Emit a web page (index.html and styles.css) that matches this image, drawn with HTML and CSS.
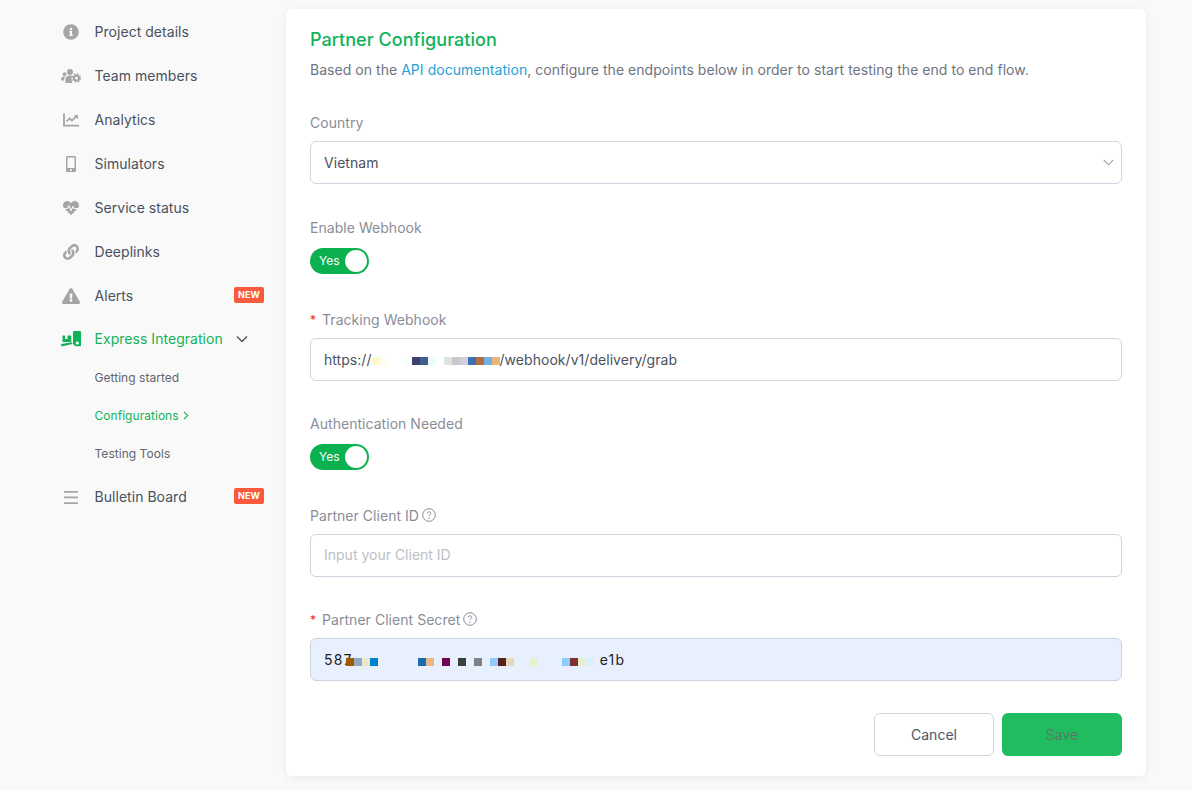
FILE: index.html
```html
<!DOCTYPE html>
<html lang="en">
<head>
    <meta charset="UTF-8">
    <meta name="viewport" content="width=device-width, initial-scale=1.0">
    <title>Partner Configuration</title>
    <link rel="stylesheet" href="styles.css">
</head>
<body>

    <nav class="sidebar">
        <a class="nav-item">
            <span class="nav-icon"><svg width="16" height="16" viewBox="0 0 512 512"><path d="M256 8C119 8 8 119 8 256s111 248 248 248 248-111 248-248S393 8 256 8zm0 110c23.2 0 42 18.8 42 42s-18.8 42-42 42-42-18.8-42-42 18.8-42 42-42zm56 254c0 6.6-5.4 12-12 12h-88c-6.6 0-12-5.4-12-12v-24c0-6.6 5.4-12 12-12h12v-64h-12c-6.6 0-12-5.4-12-12v-24c0-6.6 5.4-12 12-12h64c6.6 0 12 5.4 12 12v100h12c6.6 0 12 5.4 12 12v24z"/></svg></span>
            <span>Project details</span>
        </a>
        <a class="nav-item">
            <span class="nav-icon"><svg width="20" height="15" viewBox="0 0 20 15"><circle cx="9" cy="3" r="3"/><circle cx="3.6" cy="5.2" r="1.9"/><path d="M0 11c0-2.200 1.200-3.500 2.800-3.500h1.800c-1 .9-1.600 2.200-1.600 3.900H.6c-.4 0-.6-.1-.6-.4zM4.200 11.500c0-3 1.800-5 4.800-5 .7 0 1.400.1 2 .4-.6 1.900-.6 4.500.2 7H5.600c-.9 0-1.400-.6-1.400-2.400z"/><circle cx="15.500" cy="9" r="2.600" fill="none" stroke="#a5a5a5" stroke-width="2"/><circle cx="15.500" cy="9" r="4" fill="none" stroke="#a5a5a5" stroke-width="1.400" stroke-dasharray="1.600 1.540"/></svg></span>
            <span>Team members</span>
        </a>
        <a class="nav-item">
            <span class="nav-icon"><svg width="16" height="14" viewBox="0 0 16 14"><path d="M1 0.500V12.700H16" fill="none" stroke="#a5a5a5" stroke-width="1.800"/><path d="M3.500 8.500L6.500 5.500L9 7.500L13 3.300" fill="none" stroke="#a5a5a5" stroke-width="1.700"/><path d="M10.800 2H15V6.200z"/></svg></span>
            <span>Analytics</span>
        </a>
        <a class="nav-item">
            <span class="nav-icon"><svg width="10" height="16" viewBox="0 0 320 512"><path d="M272 0H48C21.500 0 0 21.500 0 48v416c0 26.500 21.500 48 48 48h224c26.500 0 48-21.500 48-48V48c0-26.500-21.500-48-48-48zM160 480c-17.700 0-32-14.300-32-32s14.300-32 32-32 32 14.300 32 32-14.300 32-32 32zm112-108c0 6.600-5.400 12-12 12H60c-6.600 0-12-5.400-12-12V60c0-6.600 5.400-12 12-12h200c6.600 0 12 5.400 12 12v312z"/></svg></span>
            <span>Simulators</span>
        </a>
        <a class="nav-item">
            <span class="nav-icon"><svg width="16" height="16" viewBox="0 0 512 512"><path d="M320.200 243.800l-49.700 99.400c-6 12.100-23.400 11.700-28.900-.6l-56.900-126.300-30 71.700H60.600l182.500 186.500c7.100 7.300 18.600 7.300 25.700 0L451.400 288H342.300l-22.100-44.200zM473.700 73.900l-2.400-2.500c-51.500-52.600-135.800-52.600-187.400 0L256 100l-27.900-28.500c-51.500-52.700-135.900-52.700-187.400 0l-2.400 2.400C-10.400 123.700-12.500 203 31 256h102.400l35.900-86.200c5.400-12.900 23.600-13.200 29.400-.4l58.200 129.300 49-97.900c5.900-11.800 22.700-11.800 28.600 0l27.600 55.200H481c43.500-53 41.400-132.300-7.300-182.100z"/></svg></span>
            <span>Service status</span>
        </a>
        <a class="nav-item">
            <span class="nav-icon"><svg width="16" height="16" viewBox="0 0 512 512"><path d="M326.612 185.391c59.747 59.809 58.927 155.698.36 214.590-.11.120-.24.250-.36.370l-67.200 67.200c-59.270 59.270-155.699 59.262-214.960 0-59.270-59.260-59.270-155.700 0-214.960l37.106-37.106c9.840-9.840 26.786-3.300 27.294 10.606.648 17.722 3.826 35.527 9.690 52.721 1.986 5.822.567 12.262-3.783 16.612l-13.087 13.087c-28.026 28.026-28.905 73.660-1.155 101.960 28.024 28.579 74.086 28.749 102.325.510l67.200-67.190c28.191-28.191 28.073-73.757 0-101.830-3.701-3.694-7.429-6.564-10.341-8.569a16.037 16.037 0 0 1-6.947-12.606c-.396-10.567 3.348-21.456 11.698-29.806l21.054-21.055c5.521-5.521 14.182-6.199 20.584-1.731a152.482 152.482 0 0 1 20.522 17.197zM467.547 44.449c-59.261-59.262-155.690-59.270-214.960 0l-67.200 67.200c-.12.120-.25.250-.36.370-58.566 58.892-59.387 154.781.36 214.590a152.454 152.454 0 0 0 20.521 17.196c6.402 4.468 15.064 3.789 20.584-1.731l21.054-21.055c8.350-8.350 12.094-19.239 11.698-29.806a16.037 16.037 0 0 0-6.947-12.606c-2.912-2.005-6.640-4.875-10.341-8.569-28.073-28.073-28.191-73.639 0-101.830l67.200-67.190c28.239-28.239 74.300-28.069 102.325.510 27.750 28.300 26.872 73.934-1.155 101.960l-13.087 13.087c-4.350 4.350-5.769 10.790-3.783 16.612 5.864 17.194 9.042 34.999 9.690 52.721.509 13.906 17.454 20.446 27.294 10.606l37.106-37.106c59.271-59.259 59.271-155.699.001-214.959z"/></svg></span>
            <span>Deeplinks</span>
        </a>
        <a class="nav-item">
            <span class="nav-icon"><svg width="18" height="16" viewBox="0 0 576 512"><path d="M569.517 440.013C587.975 472.007 564.806 512 527.940 512H48.054c-36.937 0-59.999-40.055-41.577-71.987L246.423 23.985c18.467-32.009 64.720-31.951 83.154 0l239.940 416.028zM288 354c-25.405 0-46 20.595-46 46s20.595 46 46 46 46-20.595 46-46-20.595-46-46-46zm-43.673-165.346l7.418 136c.347 6.364 5.609 11.346 11.982 11.346h48.546c6.373 0 11.635-4.982 11.982-11.346l7.418-136c.375-6.874-5.098-12.654-11.982-12.654h-63.383c-6.884 0-12.356 5.780-11.981 12.654z"/></svg></span>
            <span class="nav-text">Alerts</span>
            <span class="badge">NEW</span>
        </a>
        <a class="nav-item nav-item-active">
            <span class="nav-icon"><svg width="20" height="16" viewBox="0 0 20 16"><path d="M12 1a1 1 0 0 1 1-1h6a1 1 0 0 1 1 1v13.500a.800.800 0 0 1-.800.800H14.500L12 13z"/><circle cx="16.300" cy="12" r="1.500" fill="#fff"/><path d="M1.500 4.500H4V8H6.500V4.500H9.500c.500 0 .800.300.800.800V11H1.500z"/><path d="M0 13l11-1.800.400 1.800L.600 15.500z"/></svg></span>
            <span class="nav-text">Express Integration</span>
            <svg class="nav-caret" width="12" height="8" viewBox="0 0 12 8"><path d="M1 1.500L6 6.500L11 1.500" fill="none" stroke="#4a4f57" stroke-width="1.300"/></svg>
        </a>
        <div class="submenu">
            <a class="sub-item">Getting started</a>
            <a class="sub-item sub-item-active">Configurations
                <svg width="6" height="9" viewBox="0 0 6 9"><path d="M1 .8L4.700 4.500L1 8.200" fill="none" stroke="#12b358" stroke-width="1.100"/></svg>
            </a>
            <a class="sub-item">Testing Tools</a>
        </div>
        <a class="nav-item nav-item-last">
            <span class="nav-icon"><svg width="14" height="13" viewBox="0 0 14 13"><path d="M0 0h14v1.700H0zM0 5.600h14v1.700H0zM0 11.200h14v1.700H0z"/></svg></span>
            <span class="nav-text">Bulletin Board</span>
            <span class="badge">NEW</span>
        </a>
    </nav>

    <main class="card">
        <h1 class="card-title">Partner Configuration</h1>
        <p class="card-desc">Based on the <a class="link">API documentation</a>, configure the endpoints below in order to start testing the end to end flow.</p>

        <div class="form-item form-item-country">
            <label class="form-label">Country</label>
            <div class="field">
                <span class="field-value">Vietnam</span>
                <svg class="select-arrow" width="11" height="7" viewBox="0 0 11 7"><path d="M.7 .8L5.500 5.800L10.300 .8" fill="none" stroke="#9a9ca3" stroke-width="1.100"/></svg>
            </div>
        </div>

        <div class="form-item form-item-switch">
            <label class="form-label">Enable Webhook</label>
            <div class="switch"><span class="switch-text">Yes</span><span class="switch-knob"></span></div>
        </div>

        <div class="form-item">
            <label class="form-label"><span class="required">*</span>Tracking Webhook</label>
            <div class="field field-url">
                <span class="field-value">https://</span><span class="redact redact-url"></span><span class="field-value">/webhook/v1/delivery/grab</span>
            </div>
        </div>

        <div class="form-item form-item-switch">
            <label class="form-label">Authentication Needed</label>
            <div class="switch"><span class="switch-text">Yes</span><span class="switch-knob"></span></div>
        </div>

        <div class="form-item">
            <label class="form-label">Partner Client ID<svg class="help" width="14" height="14" viewBox="0 0 14 14"><circle cx="7" cy="7" r="6.300" fill="none" stroke="#8a8d98" stroke-width="1"/><path d="M5.200 5.600c0-1.100.8-1.800 1.800-1.800s1.800.7 1.800 1.700c0 1.300-1.800 1.300-1.800 2.700" fill="none" stroke="#8a8d98" stroke-width="1"/><circle cx="7" cy="10.200" r=".7" fill="#8a8d98"/></svg></label>
            <input class="field field-input" type="text" placeholder="Input your Client ID">
        </div>

        <div class="form-item">
            <label class="form-label"><span class="required">*</span>Partner Client Secret<svg class="help" width="14" height="14" viewBox="0 0 14 14"><circle cx="7" cy="7" r="6.300" fill="none" stroke="#8a8d98" stroke-width="1"/><path d="M5.200 5.600c0-1.100.8-1.800 1.800-1.800s1.800.7 1.800 1.700c0 1.300-1.800 1.300-1.800 2.700" fill="none" stroke="#8a8d98" stroke-width="1"/><circle cx="7" cy="10.200" r=".7" fill="#8a8d98"/></svg></label>
            <div class="field field-autofill">
                <span class="field-value secret-text">587</span><span class="redact redact-secret"></span><span class="field-value secret-text">e1b</span>
            </div>
        </div>

        <div class="form-actions">
            <button class="btn btn-cancel" type="button">Cancel</button>
            <button class="btn btn-save" type="button">Save</button>
        </div>
    </main>

</body>
</html>
```

FILE: styles.css
```css
* {
    box-sizing: border-box;
}
html, body {
    height: 790px;
    overflow: hidden;
}
body {
    font-family: Inter, "Liberation Sans", sans-serif;
    font-size: 14px;
    letter-spacing: 0.04px;
    background-color: #f9f9f9;
    color: #4a5160;
    margin: 0;
    display: flex;
    align-items: flex-start;
}

/* Sidebar */
.sidebar {
    width: 286px;
    flex-shrink: 0;
    padding: 9px 22px 0 60px;
}
.nav-item {
    display: flex;
    align-items: center;
    height: 44px;
}
.nav-icon {
    width: 22px;
    margin-right: 12.5px;
    display: flex;
    justify-content: center;
    flex-shrink: 0;
    position: relative;
    top: 1px;
}
.nav-icon svg {
    fill: #a5a5a5;
}
.nav-text {
    flex: 1;
}
.nav-item-active {
    height: 41px;
    padding-top: 2px;
    color: #12b358;
}
.nav-item-active .nav-icon {
    top: 0;
}
.nav-item-active .nav-icon svg {
    fill: #12b358;
}
.nav-caret {
    margin-right: 16px;
}
.nav-item-last {
    margin-top: 2px;
}
.badge {
    background-color: #fa5a3c;
    color: white;
    font-size: 9px;
    font-weight: 700;
    width: 30px;
    height: 16px;
    line-height: 16px;
    text-align: center;
    border-radius: 2px;
}
.submenu {
    padding-left: 34.5px;
}
.sub-item {
    display: flex;
    align-items: center;
    gap: 4px;
    height: 38px;
    font-size: 12px;
    color: #5f6470;
}
.sub-item-active {
    color: #12b358;
}

/* Card */
.card {
    width: 860px;
    height: 767px;
    margin-top: 9px;
    padding: 21px 24px 0;
    background: white;
    border-radius: 6px;
    box-shadow: 0 2px 10px rgba(0, 0, 0, 0.06);
}
.card-title {
    font-size: 18px;
    font-weight: 500;
    line-height: 20px;
    margin: 0;
    color: #12b358;
}
.card-desc {
    line-height: 22px;
    margin: 9px 0 31px;
    color: #6f7480;
}
.link {
    color: #2a9fd6;
}

/* Form */
.form-item {
    margin-bottom: 32px;
}
.form-item-country {
    margin-bottom: 33px;
}
.form-item-switch {
    margin-bottom: 35px;
}
.form-label {
    display: flex;
    align-items: center;
    height: 20px;
    margin-bottom: 9px;
    color: #8a8d98;
}
.form-item-switch .form-label {
    margin-bottom: 11px;
}
.required {
    color: #f5222d;
    font-size: 12px;
    margin-right: 6px;
}
.help {
    margin-left: 2.5px;
}
.field {
    display: flex;
    align-items: center;
    width: 100%;
    height: 43px;
    padding: 0 13px;
    border: 1px solid #cbd5e0;
    border-radius: 6px;
    background: white;
    color: #4a5160;
}
.field-url {
    padding-bottom: 1px;
}
.field-input {
    font-family: inherit;
    font-size: 14px;
    padding-bottom: 2px;
    outline: none;
}
.field-input::placeholder {
    color: #bcbfc6;
}
.field-autofill {
    background-color: #e8f0fe;
    color: #222;
}
.secret-text {
    letter-spacing: 1.2px;
}
.select-arrow {
    margin-left: auto;
    margin-right: -6px;
}
.redact {
    height: 8px;
    flex-shrink: 0;
}
.redact-url {
    width: 128px;
    margin-top: 4px;
    background: linear-gradient(to right,
        #fff9d0 0 8px, #fdfdf0 8px 16px, white 16px 32px, #f8feff 32px 40px,
        #3d4070 40px 48px, #3f5f8a 48px 56px, #e8fcff 56px 64px, white 64px 72px,
        #dce4e4 72px 80px, #c8c8c8 80px 88px, #cfcfe2 88px 96px, #3e6fb0 96px 104px,
        #b07040 104px 112px, #70b0e4 112px 120px, #e8b870 120px 128px);
}
.redact-secret {
    width: 248px;
    margin-top: 5px;
    margin-left: -7px;
    margin-right: 6px;
    background: linear-gradient(to right,
        #a05a00 0 8px, #90a8c0 8px 16px, #e8e8d0 16px 24px, #0080c8 24px 32px,
        transparent 32px 72px, #1a6db0 72px 80px, #e8b880 80px 88px, transparent 88px 96px,
        #700050 96px 104px, transparent 104px 112px, #3a4040 112px 120px, transparent 120px 128px,
        #808088 128px 136px, transparent 136px 144px, #90ccff 144px 152px, #5a2020 152px 160px,
        #e8d8b8 160px 168px, transparent 168px 184px, #e8f0d0 184px 192px, transparent 192px 208px,
        #e4f2ff 208px 216px, #90ccff 216px 224px, #803030 224px 232px, #e8f0d0 232px 240px,
        #daf0ff 240px 248px);
}

/* Switch */
.switch {
    display: flex;
    align-items: center;
    justify-content: space-between;
    width: 59px;
    height: 26px;
    padding: 0 2px 0 9px;
    border-radius: 13px;
    background-color: #0cb14f;
}
.switch-text {
    color: white;
    font-size: 12px;
    padding-bottom: 2px;
}
.switch-knob {
    width: 22px;
    height: 22px;
    border-radius: 50%;
    background: white;
}

/* Buttons */
.form-actions {
    display: flex;
    justify-content: flex-end;
    gap: 8px;
}
.btn {
    width: 120px;
    height: 43px;
    border-radius: 6px;
    font-family: inherit;
    font-size: 14px;
}
.btn-cancel {
    background: white;
    border: 1px solid #cbd5e0;
    color: #4a5568;
}
.btn-save {
    background-color: #20bd60;
    border: none;
    color: #5a7a68;
}
```
